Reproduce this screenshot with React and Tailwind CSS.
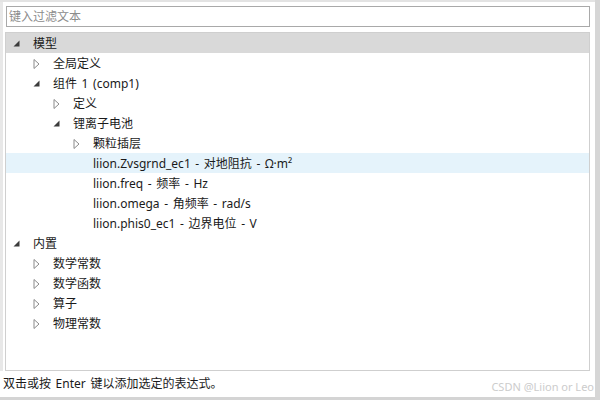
import React from "react";

const tree = [
  { label: "模型", level: 0, state: "open", selected: true },
  { label: "全局定义", level: 1, state: "closed" },
  { label: "组件 1 (comp1)", level: 1, state: "open" },
  { label: "定义", level: 2, state: "closed" },
  { label: "锂离子电池", level: 2, state: "open" },
  { label: "颗粒插层", level: 3, state: "closed" },
  { label: "liion.Zvsgrnd_ec1 - 对地阻抗 - Ω·m²", level: 3, hover: true },
  { label: "liion.freq - 频率 - Hz", level: 3 },
  { label: "liion.omega - 角频率 - rad/s", level: 3 },
  { label: "liion.phis0_ec1 - 边界电位 - V", level: 3 },
  { label: "内置", level: 0, state: "open" },
  { label: "数学常数", level: 1, state: "closed" },
  { label: "数学函数", level: 1, state: "closed" },
  { label: "算子", level: 1, state: "closed" },
  { label: "物理常数", level: 1, state: "closed" },
];

const Arrow = ({ state }) => {
  if (state === "open") {
    return (
      <svg width="7" height="7" viewBox="0 0 7 7">
        <path d="M6.5 0.5 L6.5 6.5 L0.5 6.5 Z" fill="#3c3c3c" />
      </svg>
    );
  }
  if (state === "closed") {
    return (
      <svg width="7" height="10" viewBox="0 0 7 10">
        <path d="M1 0.5 L6 5 L1 9.5 Z" fill="white" stroke="#8a8a8a" strokeWidth="1" />
      </svg>
    );
  }
  return null;
};

const Row = ({ item }) => (
  <div
    className={
      "flex items-center h-5 " +
      (item.selected ? "bg-[#d9d9d9] " : "") +
      (item.hover ? "bg-[#e5f3fb] " : "")
    }
  >
    <div style={{ width: item.level * 20 }} className="shrink-0" />
    <div className="w-[27px] shrink-0 flex items-center pl-[7px] pt-[1px]">
      <Arrow state={item.state} />
    </div>
    <span className="text-[12px] text-[#1a1a1a] whitespace-pre pt-[2px] [word-spacing:1.5px]">
      {item.label}
    </span>
  </div>
);

export default function App() {
  return (
    <div
      className="w-[600px] h-[400px] bg-white flex overflow-hidden"
      style={{ fontFamily: '"Noto Sans", "Noto Sans CJK SC", sans-serif' }}
    >
      <div className="flex-1 flex flex-col border-t-2 border-[#e3e3e3]">
        <div className="flex flex-1 min-h-0">
          <div className="w-[3px] bg-[#e8e8e8] mr-[2px]" />
          <div className="flex-1 flex flex-col pt-[4px] pr-[5px]">
            <div className="h-[21px] border border-[#a9a9a9] ml-[1px] flex items-center pl-[2px]">
              <span className="text-[12px] text-[#8c8c8c]">键入过滤文本</span>
            </div>
            <div className="flex-1 mt-[5px] border border-[#cfcfcf] overflow-hidden">
              {tree.map((item, i) => (
                <Row key={i} item={item} />
              ))}
            </div>
          </div>
        </div>
        <div className="h-[29px] flex justify-between pl-[3px] pr-[1px] border-b-[3px] border-[#d4d4d4]">
          <span className="text-[12px] text-[#1a1a1a] pt-[4px] [word-spacing:1.5px]">
            双击或按 Enter 键以添加选定的表达式。
          </span>
          <span className="text-[11px] text-[#cccccc] pt-[8px]">CSDN @Liion or Leo</span>
        </div>
      </div>
      <div className="w-[5px] bg-[#d6d6d6]" />
    </div>
  );
}
